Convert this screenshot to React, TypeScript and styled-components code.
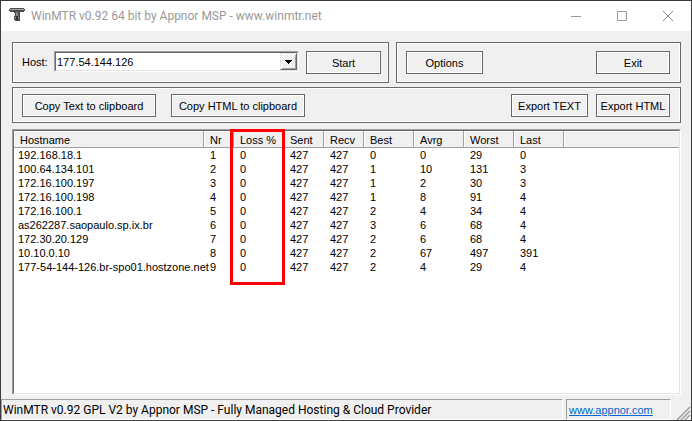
import React from 'react';
import styled, { createGlobalStyle } from 'styled-components';

const Global = createGlobalStyle`
  * { box-sizing: border-box; }
  html, body { margin: 0; }
  body {
    background: #3c3a3c;
    color: #000;
    font: 11px/14px "Liberation Sans", Arial, sans-serif;
  }
  button, select { font: inherit; color: inherit; }
`;

const Win = styled.div`
  display: flex;
  flex-direction: column;
  height: 100vh;
  padding: 1px;
`;

const TitleBar = styled.header`
  display: flex;
  align-items: center;
  flex: none;
  height: 30px;
  padding-left: 8px;
  background: #fff;
`;

const Title = styled.h1`
  flex: 1;
  margin: 0 0 0 6px;
  font: 12px/16px Roboto, sans-serif;
  color: #999;
  white-space: nowrap;
`;

const Caption = styled.button`
  display: flex;
  align-items: center;
  justify-content: center;
  width: 46px;
  height: 30px;
  padding: 0;
  border: 0;
  background: none;
`;

const Body = styled.main`
  display: flex;
  flex: 1;
  flex-direction: column;
  gap: 4px;
  padding: 11px 10px 4px 11px;
  background: #f0f0f0;
`;

const TopRow = styled.div`
  display: flex;
  gap: 7px;
`;

const Group = styled.section<{ $grow?: number; $tall?: boolean; $end?: number }>`
  display: flex;
  align-items: flex-start;
  flex: ${(p) => p.$grow ?? 1} 1 0;
  min-width: 0;
  height: ${(p) => (p.$tall ? 41 : 36)}px;
  padding: ${(p) => (p.$tall ? 8 : 6)}px ${(p) => p.$end ?? 10}px 0 9px;
  border: 1px solid #696969;
  box-shadow: inset 0 0 0 1px #fff;
`;

const ToolRow = styled.div`
  display: flex;
`;

const Push = styled.button<{ $w: number }>`
  flex: none;
  width: ${(p) => p.$w}px;
  height: 23px;
  padding: 0;
  border: 1px solid #696969;
  background: #f0f0f0;
  box-shadow: inset 0 0 0 1px #fff;
  line-height: 14px;
`;

const Spacer = styled.span<{ $w?: number }>`
  flex: ${(p) => (p.$w ? `0 0 ${p.$w}px` : '1')};
`;

const HostLabel = styled.label`
  flex: none;
  width: 32px;
  padding-top: 4px;
`;

const Combo = styled.div`
  display: grid;
  flex: 1;
  min-width: 0;
  height: 21px;
  border: 1px solid;
  border-color: #a0a0a0 #fff #fff #a0a0a0;
`;

const HostSelect = styled.select`
  grid-area: 1 / 1;
  width: 100%;
  padding: 0 20px 0 1px;
  border: 1px solid;
  border-color: #696969 #e3e3e3 #e3e3e3 #696969;
  border-radius: 0;
  background: #fff;
  appearance: none;
  line-height: 14px;
`;

const Drop = styled.span`
  display: flex;
  grid-area: 1 / 1;
  align-items: center;
  justify-content: center;
  justify-self: end;
  width: 17px;
  height: 17px;
  margin: 1px;
  border: 1px solid;
  border-color: #e3e3e3 #696969 #696969 #e3e3e3;
  background: #f0f0f0;
  box-shadow: inset 1px 1px #fff, inset -1px -1px #a0a0a0;
  pointer-events: none;
`;

const ListBox = styled.div`
  position: relative;
  flex: 1;
  margin-top: 2px;
  border: 1px solid;
  border-color: #a0a0a0 #fff #fff #a0a0a0;
`;

const ListInner = styled.div`
  height: 100%;
  overflow: hidden;
  border: 1px solid;
  border-color: #696969 #e3e3e3 #e3e3e3 #696969;
  background: #fff;
`;

const List = styled.table`
  width: 100%;
  table-layout: fixed;
  border-collapse: separate;
  border-spacing: 0;
  white-space: nowrap;
`;

const Head = styled.th`
  height: 17px;
  padding: 2px 0 0 6px;
  background: #f0f0f0;
  border-right: 1px solid #a0a0a0;
  border-bottom: 1px solid #a0a0a0;
  box-shadow: inset 1px 1px #fff;
  font-weight: 400;
  line-height: 14px;
  text-align: left;
  &:last-child { border-right: 0; }
`;

const Cell = styled.td`
  height: 14px;
  padding: 0 0 0 6px;
  line-height: 14px;
  &:first-child { padding-left: 4px; }
`;

const Highlight = styled.div`
  position: absolute;
  top: -1px;
  left: 217px;
  width: 55px;
  height: 156px;
  border: 3px solid #f00;
`;

const Status = styled.footer`
  display: flex;
  flex: none;
  height: 21px;
  gap: 3px;
  background: #f0f0f0;
  font: 12px/16px Roboto, sans-serif;
  white-space: nowrap;
`;

const Pane = styled.div<{ $w?: number }>`
  flex: ${(p) => (p.$w ? `0 0 ${p.$w}px` : '1')};
  padding: 2px 0 0 1px;
  border: 1px solid;
  border-color: #a0a0a0 #fff #fff #a0a0a0;
`;

const Link = styled.a`
  padding-left: 1px;
  color: #0066cc;
  font: 11px/16px "Liberation Sans", Arial, sans-serif;
`;

const Grip = styled.svg`
  align-self: flex-end;
  margin-left: 2px;
`;

const columns: [string, number][] = [
  ['Hostname', 190], ['Nr', 30], ['Loss %', 50], ['Sent', 40], ['Recv', 40],
  ['Best', 50], ['Avrg', 50], ['Worst', 50], ['Last', 50],
];

const hosts: (string | number)[][] = [
  ['192.168.18.1', 1, 0, 427, 427, 0, 0, 29, 0],
  ['100.64.134.101', 2, 0, 427, 427, 1, 10, 131, 3],
  ['172.16.100.197', 3, 0, 427, 427, 1, 2, 30, 3],
  ['172.16.100.198', 4, 0, 427, 427, 1, 8, 91, 4],
  ['172.16.100.1', 5, 0, 427, 427, 2, 4, 34, 4],
  ['as262287.saopaulo.sp.ix.br', 6, 0, 427, 427, 3, 6, 68, 4],
  ['172.30.20.129', 7, 0, 427, 427, 2, 6, 68, 4],
  ['10.10.0.10', 8, 0, 427, 427, 2, 67, 497, 391],
  ['177-54-144-126.br-spo01.hostzone.net', 9, 0, 427, 427, 2, 4, 29, 4],
];

const AppIcon = () => (
  <svg width="16" height="16" viewBox="0 0 16 16" shapeRendering="crispEdges" aria-hidden="true">
    <path d="M1 0h14v1H1zM0 1h16v2H0zM1 3h14v1H1z" fill="#4a4d4d" />
    <path d="M1 1h14v1H1z" fill="#a5a8a8" />
    <path d="M5 4h6v1H5zM6 5h5v3H6zM5 8h6v4H5zM6 12h5v1H6z" fill="#4b4f50" />
    <path d="M7 4h2v4H7zM6 9h1v2H6zM9 9h1v2H9z" fill="#858989" />
    <path d="M7 8h2v4H7z" fill="#303434" />
  </svg>
);

export default function App() {
  return (
    <>
      <Global />
      <Win>
        <TitleBar>
          <AppIcon />
          <Title>WinMTR v0.92 64 bit by Appnor MSP - www.winmtr.net</Title>
          <Caption aria-label="Minimize">
            <svg width="10" height="10"><path d="M0 5.5h10" stroke="#999" /></svg>
          </Caption>
          <Caption aria-label="Maximize">
            <svg width="10" height="10"><path d="M.5.5h9v9h-9z" fill="none" stroke="#999" /></svg>
          </Caption>
          <Caption aria-label="Close">
            <svg width="10" height="10"><path d="M0 0l10 10M10 0L0 10" stroke="#888" /></svg>
          </Caption>
        </TitleBar>
        <Body>
          <TopRow>
            <Group $grow={359} $tall $end={7}>
              <HostLabel htmlFor="host">Host:</HostLabel>
              <Combo>
                <HostSelect id="host" defaultValue="177.54.144.126">
                  <option>177.54.144.126</option>
                </HostSelect>
                <Drop>
                  <svg width="7" height="4" shapeRendering="crispEdges"><path d="M0 0h7v1H0zM1 1h5v1H1zM2 2h3v1H2zM3 3h1v1H3z" /></svg>
                </Drop>
              </Combo>
              <Spacer $w={7} />
              <Push $w={75}>Start</Push>
            </Group>
            <Group $grow={264} $tall>
              <Push $w={77}>Options</Push>
              <Spacer />
              <Push $w={74}>Exit</Push>
            </Group>
          </TopRow>
          <ToolRow>
            <Group>
              <Push $w={134}>Copy Text to clipboard</Push>
              <Spacer $w={15} />
              <Push $w={134}>Copy HTML to clipboard</Push>
              <Spacer />
              <Push $w={77}>Export TEXT</Push>
              <Spacer $w={8} />
              <Push $w={74}>Export HTML</Push>
            </Group>
          </ToolRow>
          <ListBox>
            <ListInner>
              <List>
                <colgroup>
                  {columns.map(([name, w]) => <col key={name} width={w} />)}
                  <col />
                </colgroup>
                <thead>
                  <tr>
                    {columns.map(([name]) => <Head key={name} scope="col">{name}</Head>)}
                    <Head as="td" />
                  </tr>
                </thead>
                <tbody>
                  {hosts.map((row) => (
                    <tr key={row[0]}>{row.map((v, i) => <Cell key={i}>{v}</Cell>)}</tr>
                  ))}
                </tbody>
              </List>
            </ListInner>
            <Highlight />
          </ListBox>
        </Body>
        <Status>
          <Pane>WinMTR v0.92 GPL V2 by Appnor MSP - Fully Managed Hosting &amp; Cloud Provider</Pane>
          <Pane $w={105}><Link href="http://www.appnor.com">www.appnor.com</Link></Pane>
          <Grip width="15" height="14"><path d="M1 14L14 1M5 14l9-9M9 14l5-5" fill="none" stroke="#a0a0a0" strokeWidth="1.5" /></Grip>
        </Status>
      </Win>
    </>
  );
}
